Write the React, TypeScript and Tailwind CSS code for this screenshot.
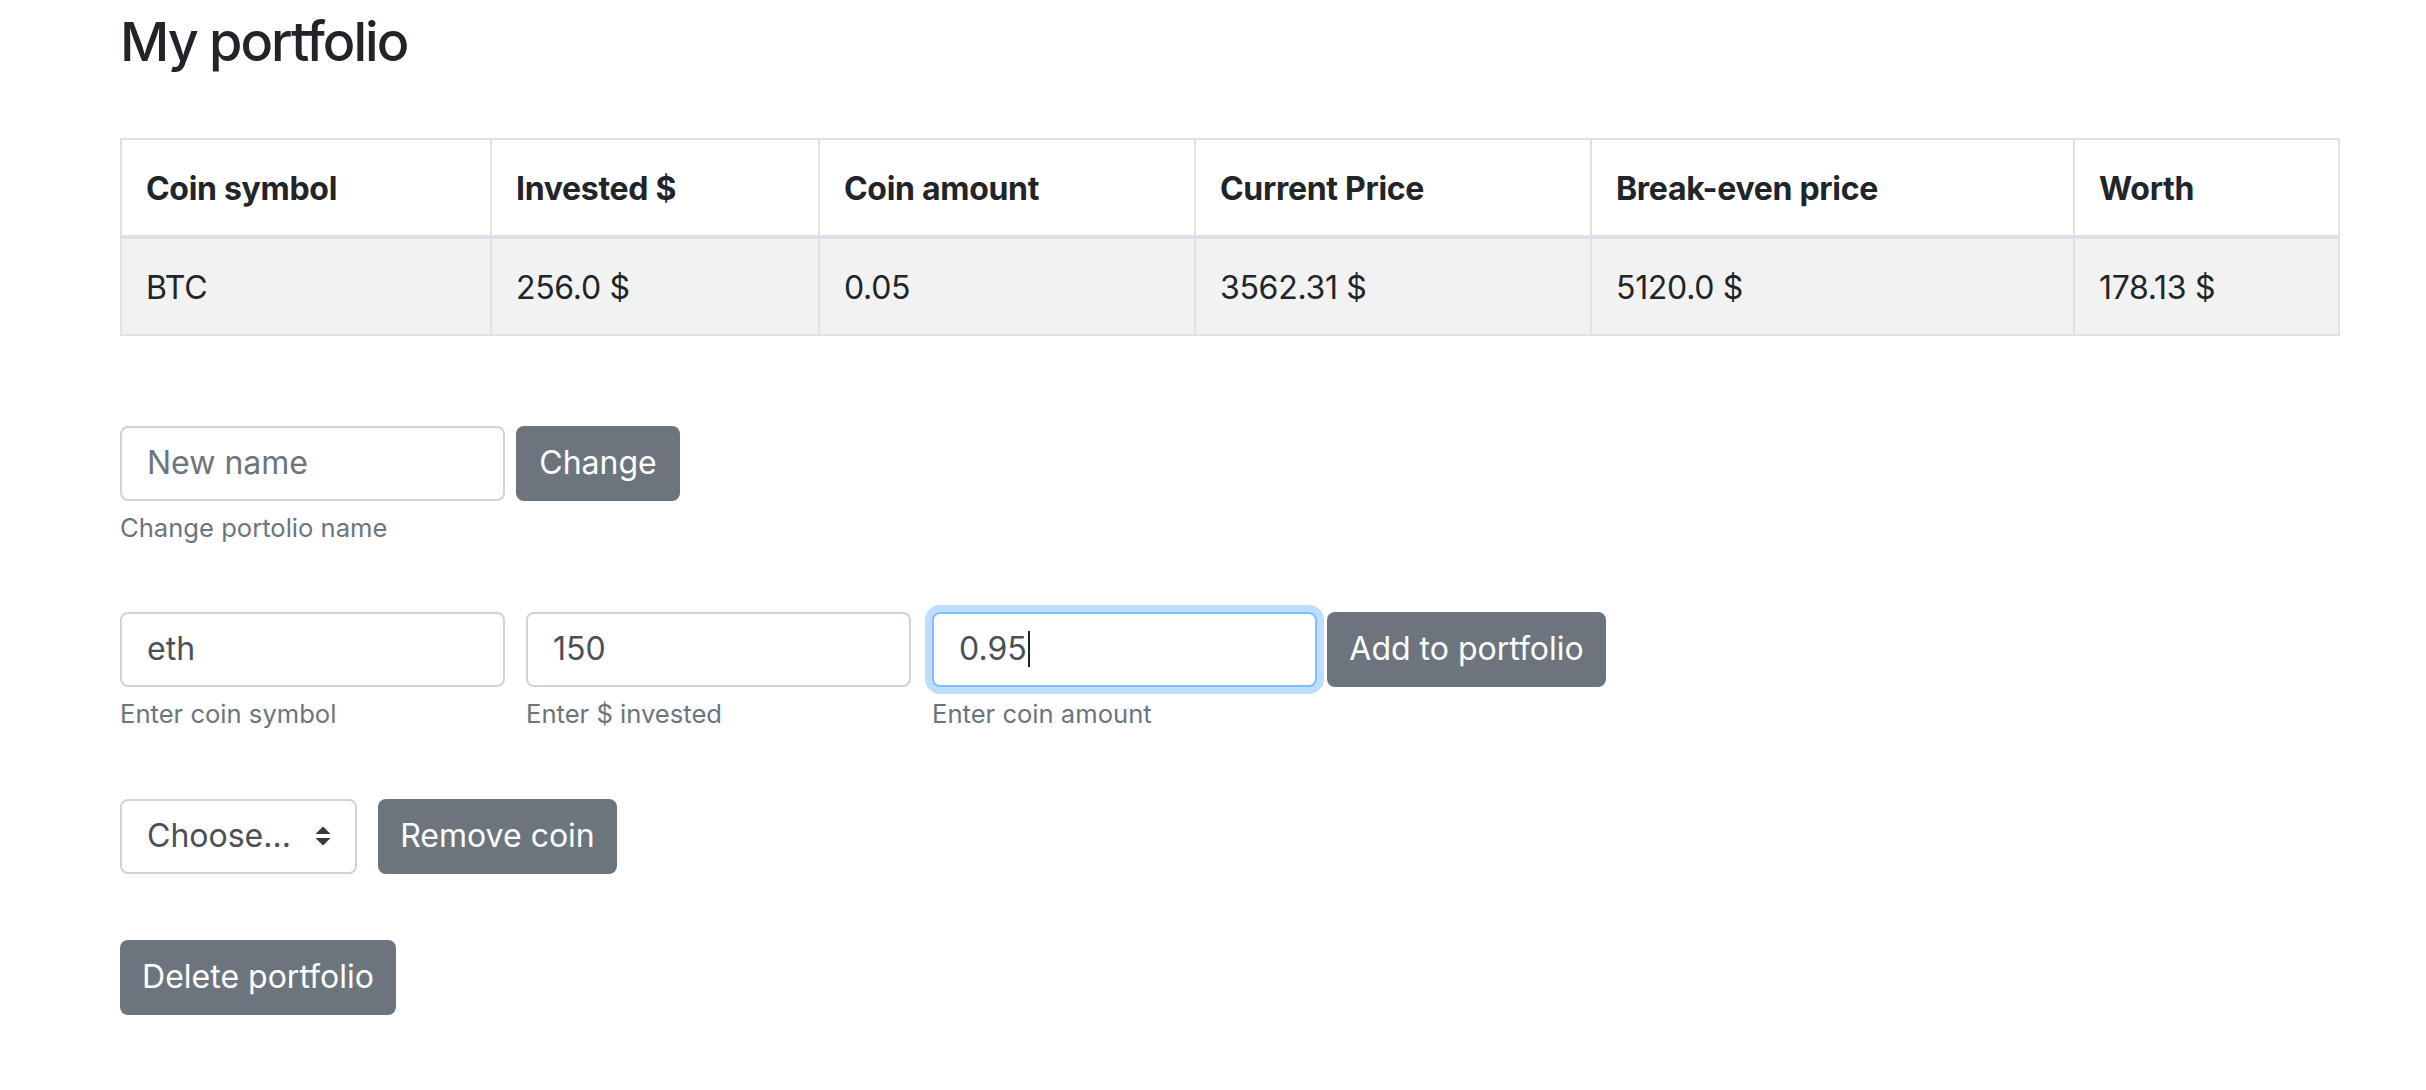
import React from "react";

const font = { fontFamily: "Inter, 'Noto Sans', sans-serif" };

function Field({ value, placeholder, width, focused }: { value?: string; placeholder?: string; width: string; focused?: boolean }) {
  return (
    <div
      className={`${width} h-[75px] box-border rounded-[8px] border-2 flex items-center px-[25px] text-[32px] bg-white ${
        focused ? "border-[#80bdff] shadow-[0_0_0_7px_rgba(0,123,255,0.25)]" : "border-[#ced4da]"
      }`}
    >
      {value ? (
        <span className="text-[#495057] flex items-center">
          {value}
          {focused && <span className="inline-block w-[2px] h-[36px] bg-[#212529] ml-[1px]" />}
        </span>
      ) : (
        <span className="text-[#6c757d]">{placeholder}</span>
      )}
    </div>
  );
}

function Btn({ children, width }: { children: React.ReactNode; width: string }) {
  return (
    <button
      className={`${width} h-[75px] rounded-[8px] bg-[#6c757d] text-white text-[32px] flex items-center justify-center shrink-0`}
    >
      {children}
    </button>
  );
}

function Help({ children, width }: { children: React.ReactNode; width?: string }) {
  return <div className={`${width ?? ""} mt-[8px] text-[25.6px] leading-[38px] text-[#6c757d]`}>{children}</div>;
}

export default function App() {
  const headers = ["Coin symbol", "Invested $", "Coin amount", "Current Price", "Break-even price", "Worth"];
  const row = ["BTC", "256.0 $", "0.05", "3562.31 $", "5120.0 $", "178.13 $"];
  const widths = ["w-[370px]", "w-[328px]", "w-[376px]", "w-[396px]", "w-[483px]", "w-[265px]"];
  return (
    <div className="min-h-screen bg-white text-[#212529] pl-[120px] pt-[10px]" style={font}>
      <h3 className="text-[54px] font-medium leading-[1.2] tracking-[-2px] mb-[63px]">My portfolio</h3>
      <table className="w-[2219px] border-collapse border-2 border-[#dee2e6] table-fixed">
        <thead>
          <tr>
            {headers.map((h, i) => (
              <th
                key={h}
                className={`${widths[i]} h-[98px] text-left font-bold text-[32px] px-[24px] pt-[4px] border-2 border-b-4 border-[#dee2e6] tracking-[-0.3px]`}
              >
                {h}
              </th>
            ))}
          </tr>
        </thead>
        <tbody>
          <tr className="bg-[#f2f2f2]">
            {row.map((c, i) => (
              <td key={i} className="h-[98px] px-[24px] pt-[3px] text-[32px] border-2 border-[#dee2e6] tracking-[-0.3px]">
                {c}
              </td>
            ))}
          </tr>
        </tbody>
      </table>

      <div className="mt-[90px]">
        <div className="flex items-start gap-[11px]">
          <div>
            <Field placeholder="New name" width="w-[385px]" />
          </div>
          <Btn width="w-[164px]">Change</Btn>
        </div>
        <Help>Change portolio name</Help>
      </div>

      <div className="mt-[65px] flex items-start">
        <div className="w-[385px] mr-[21px]">
          <Field value="eth" width="w-[385px]" />
          <Help>Enter coin symbol</Help>
        </div>
        <div className="w-[385px] mr-[21px]">
          <Field value="150" width="w-[385px]" />
          <Help>Enter $ invested</Help>
        </div>
        <div className="w-[385px] mr-[10px]">
          <Field value="0.95" width="w-[385px]" focused />
          <Help>Enter coin amount</Help>
        </div>
        <Btn width="w-[279px]">Add to portfolio</Btn>
      </div>

      <div className="mt-[66px] flex items-start gap-[21px]">
        <div className="w-[237px] h-[75px] box-border rounded-[8px] border-2 border-[#ced4da] flex items-center justify-between pl-[25px] pr-[24px] text-[32px] text-[#495057]">
          <span>Choose...</span>
          <svg width="16" height="20" viewBox="0 0 16 20">
            <path d="M8 0.5 L15.5 8 L0.5 8 Z" fill="#343a40" />
            <path d="M8 19.5 L15.5 12 L0.5 12 Z" fill="#343a40" />
          </svg>
        </div>
        <Btn width="w-[239px]">Remove coin</Btn>
      </div>

      <div className="mt-[66px]">
        <Btn width="w-[276px]">Delete portfolio</Btn>
      </div>
    </div>
  );
}
